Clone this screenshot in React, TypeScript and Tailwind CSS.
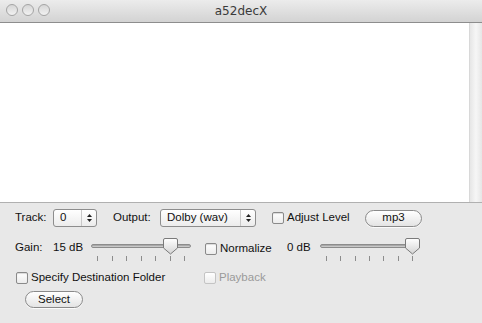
import React from 'react'

const font = { fontFamily: '"Liberation Sans", "DejaVu Sans", sans-serif' }

function Check({ disabled = false }: { disabled?: boolean }) {
  return (
    <span
      className={
        'inline-block h-[12px] w-[12px] shrink-0 rounded-[2px] border bg-gradient-to-b from-white to-[#ececec] ' +
        (disabled ? 'border-[#c4c4c4]' : 'border-[#8a8a8a] shadow-[inset_0_1px_1px_rgba(0,0,0,0.15)]')
      }
    />
  )
}

function Stepper() {
  return (
    <span className="flex flex-col items-center justify-center gap-[2px] border-l border-[#c8c8c8] pl-[5px] pr-[4px]">
      <svg width="5" height="3" viewBox="0 0 5 3">
        <path d="M0 3 L2.5 0 L5 3 Z" fill="#222" />
      </svg>
      <svg width="5" height="3" viewBox="0 0 5 3">
        <path d="M0 0 L2.5 3 L5 0 Z" fill="#222" />
      </svg>
    </span>
  )
}

function Slider({ knob, width }: { knob: number; width: string }) {
  return (
    <div className={'relative h-[28px] ' + width}>
      <div className="absolute left-0 right-0 top-[8px] h-[4px] rounded-full border border-[#8c8c8c] bg-gradient-to-b from-[#9a9a9a] to-[#d8d8d8]" />
      <svg
        className="absolute top-[2px]"
        style={{ left: knob - 7 }}
        width="15"
        height="17"
        viewBox="0 0 15 17"
      >
        <defs>
          <linearGradient id="kg" x1="0" y1="0" x2="0" y2="1">
            <stop offset="0" stopColor="#ffffff" />
            <stop offset="1" stopColor="#d4d4d4" />
          </linearGradient>
        </defs>
        <path d="M2 0.5 H13 Q14.5 0.5 14.5 2 V10 L7.5 16 L0.5 10 V2 Q0.5 0.5 2 0.5 Z" fill="url(#kg)" stroke="#7a7a7a" />
      </svg>
      <div className="absolute left-[6px] right-[6px] top-[20px] flex justify-between">
        {[0, 1, 2, 3, 4, 5, 6].map((i) => (
          <span key={i} className="h-[5px] w-px bg-[#8c8c8c]" />
        ))}
      </div>
    </div>
  )
}

function PillButton({ label, width }: { label: string; width: string }) {
  return (
    <span
      className={
        width +
        ' flex h-[17px] items-center justify-center rounded-full border border-[#8a8a8a] bg-gradient-to-b from-white to-[#e4e4e4] text-[11.5px] text-[#111] shadow-[0_1px_0_rgba(255,255,255,0.8)]'
      }
    >
      {label}
    </span>
  )
}

export default function App() {
  return (
    <div className="flex h-[323px] w-[482px] flex-col bg-[#e8e8e8] text-[11.5px] text-[#111]" style={font}>
      <header className="relative flex h-[23px] items-center border-b border-[#8d8d8d] bg-gradient-to-b from-[#ececec] to-[#d3d3d3]">
        <div className="absolute left-[6px] top-[4px] flex gap-[4px]">
          {[0, 1, 2].map((i) => (
            <span
              key={i}
              className="h-[12px] w-[12px] rounded-full border border-[#a4a4a4] bg-gradient-to-b from-[#d6d6d6] to-[#f2f2f2]"
            />
          ))}
        </div>
        <div className="flex-1 text-center text-[12px] text-[#3a3a3a]" style={{ fontFamily: '"DejaVu Sans", sans-serif' }}>
          a52decX
        </div>
      </header>

      <main className="flex h-[180px] border-b border-[#b0b0b0] bg-white">
        <div className="flex-1" />
        <div className="w-[13px] border-l border-[#d8d8d8] bg-gradient-to-r from-[#e6e6e6] via-[#f6f6f6] to-[#e6e6e6]" />
      </main>

      <section className="flex flex-1 flex-col pl-[15px] pt-[6px]">
        <div className="flex h-[18px] items-center">
          <span className="w-[38px]">Track:</span>
          <span className="flex h-[18px] w-[44px] items-stretch rounded-[3px] border border-[#8d8d8d] bg-gradient-to-b from-white to-[#ececec]">
            <span className="flex flex-1 items-center pl-[6px]">0</span>
            <Stepper />
          </span>
          <span className="ml-[16px] w-[47px]">Output:</span>
          <span className="flex h-[18px] w-[96px] items-stretch rounded-[3px] border border-[#8d8d8d] bg-gradient-to-b from-white to-[#ececec]">
            <span className="flex flex-1 items-center pl-[6px]">Dolby (wav)</span>
            <Stepper />
          </span>
          <span className="ml-[16px] flex w-[93px] items-center gap-[3px]">
            <Check />
            <span>Adjust Level</span>
          </span>
          <PillButton label="mp3" width="w-[57px]" />
        </div>

        <div className="mt-[9px] flex h-[28px] items-start">
          <span className="w-[38px] pt-[3px]">Gain:</span>
          <span className="w-[38px] pt-[3px]">15 dB</span>
          <Slider knob={79} width="w-[100px]" />
          <span className="ml-[14px] flex w-[82px] items-center gap-[3px] pt-[4px]">
            <Check />
            <span>Normalize</span>
          </span>
          <span className="w-[33px] pt-[3px]">0 dB</span>
          <Slider knob={92} width="w-[99px]" />
        </div>

        <div className="mt-[6px] flex h-[16px] items-center">
          <span className="flex w-[189px] items-center gap-[3px] pl-[1px]">
            <Check />
            <span>Specify Destination Folder</span>
          </span>
          <span className="flex items-center gap-[3px] text-[#9a9a9a]">
            <Check disabled />
            <span>Playback</span>
          </span>
        </div>

        <div className="ml-[10px] mt-[5px]">
          <PillButton label="Select" width="w-[58px]" />
        </div>
      </section>
    </div>
  )
}
